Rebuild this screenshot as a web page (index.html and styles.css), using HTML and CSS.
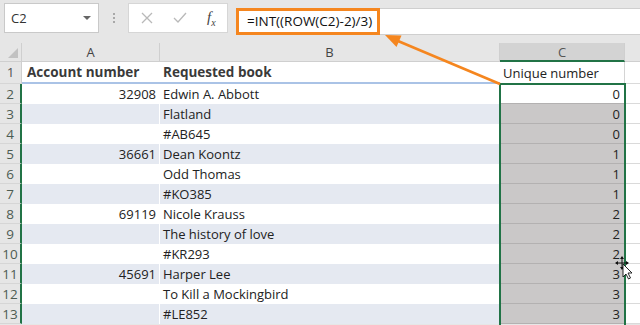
FILE: index.html
```html
<!DOCTYPE html>
<html lang="en">
  <head>
    <meta charset="UTF-8" />
    <title>Unique number</title>
    <link rel="stylesheet" href="styles.css">
  </head>
  <body>
    <!-- Formula bar -->
    <div class="toolbar">
      <div class="namebox">C2<span class="caret"></span></div>
      <div class="dots"><i></i><i></i><i></i></div>
      <div class="fbtns">
        <svg width="12" height="12" viewBox="0 0 12 12"><path d="M1 1 L11 11 M11 1 L1 11" stroke="#b9b9b9" stroke-width="1.3" fill="none"/></svg>
        <svg width="14" height="12" viewBox="0 0 14 12"><path d="M1 6 L5 10 L13 1" stroke="#b9b9b9" stroke-width="1.3" fill="none"/></svg>
        <span class="fx">f<sub>x</sub></span>
      </div>
      <div class="fbar"><span class="formula">=INT((ROW(C2)-2)/3)</span></div>
    </div>

    <!-- Sheet -->
    <div class="sheet">
      <div class="corner"><span class="tri"></span></div>
      <div class="colhead">A</div>
      <div class="colhead">B</div>
      <div class="colhead sel">C</div>
      <div class="colhead last"></div>

      <div class="rowhead">1</div>
      <div class="cell th first">Account number</div>
      <div class="cell th">Requested book</div>
      <div class="cell c1">Unique number</div>
      <div class="cell d"></div>

      <div class="rowhead on">2</div>
      <div class="cell num">32908</div>
      <div class="cell">Edwin A. Abbott</div>
      <div class="cell cc active">0</div>
      <div class="cell d"></div>

      <div class="rowhead on">3</div>
      <div class="cell num band"></div>
      <div class="cell band">Flatland</div>
      <div class="cell cc">0</div>
      <div class="cell d"></div>

      <div class="rowhead on">4</div>
      <div class="cell num"></div>
      <div class="cell">#AB645</div>
      <div class="cell cc">0</div>
      <div class="cell d"></div>

      <div class="rowhead on">5</div>
      <div class="cell num band">36661</div>
      <div class="cell band">Dean Koontz</div>
      <div class="cell cc">1</div>
      <div class="cell d"></div>

      <div class="rowhead on">6</div>
      <div class="cell num"></div>
      <div class="cell">Odd Thomas</div>
      <div class="cell cc">1</div>
      <div class="cell d"></div>

      <div class="rowhead on">7</div>
      <div class="cell num band"></div>
      <div class="cell band">#KO385</div>
      <div class="cell cc">1</div>
      <div class="cell d"></div>

      <div class="rowhead on">8</div>
      <div class="cell num">69119</div>
      <div class="cell">Nicole Krauss</div>
      <div class="cell cc">2</div>
      <div class="cell d"></div>

      <div class="rowhead on">9</div>
      <div class="cell num band"></div>
      <div class="cell band">The history of love</div>
      <div class="cell cc">2</div>
      <div class="cell d"></div>

      <div class="rowhead on">10</div>
      <div class="cell num"></div>
      <div class="cell">#KR293</div>
      <div class="cell cc">2</div>
      <div class="cell d"></div>

      <div class="rowhead on">11</div>
      <div class="cell num band">45691</div>
      <div class="cell band">Harper Lee</div>
      <div class="cell cc">3</div>
      <div class="cell d"></div>

      <div class="rowhead on">12</div>
      <div class="cell num"></div>
      <div class="cell">To Kill a Mockingbird</div>
      <div class="cell cc">3</div>
      <div class="cell d"></div>

      <div class="rowhead on">13</div>
      <div class="cell num band"></div>
      <div class="cell band">#LE852</div>
      <div class="cell cc">3</div>
      <div class="cell d"></div>

      <!-- selected range C2:C13 -->
      <div class="selection"></div>
    </div>

    <!-- Callout arrow -->
    <svg class="arrow" width="640" height="325" viewBox="0 0 640 325">
      <line x1="500" y1="84" x2="398" y2="41" stroke="#f5861f" stroke-width="2.6"/>
      <polygon points="385,35 401.5,35.5 396.5,47" fill="#f5861f"/>
    </svg>

    <!-- Mouse cursor -->
    <svg class="cursor" width="22" height="24" viewBox="0 0 22 24">
      <path d="M7 1 L7 13 M1 7 L13 7" stroke="#111" stroke-width="1"/>
      <path d="M7 0 L5 3 L9 3 Z M7 14 L5 11 L9 11 Z M0 7 L3 5 L3 9 Z M14 7 L11 5 L11 9 Z" fill="#111"/>
      <path d="M8 8 L8 21 L11 18 L13.5 23 L15.5 22 L13 17 L17 17 Z" fill="#fff" stroke="#111" stroke-width="0.9"/>
    </svg>
  </body>
</html>
```

FILE: styles.css
```css
* {
  margin: 0;
  padding: 0;
  box-sizing: border-box;
}

body {
  width: 640px;
  height: 325px;
  overflow: hidden;
  position: relative;
  background: #e6e6e6;
  font-family: "Open Sans", "Noto Sans", sans-serif;
  color: #222;
}

/* Formula bar */
.toolbar {
  height: 43px;
  display: flex;
  align-items: flex-start;
  padding: 3px 0 0 4px;
}

.namebox {
  width: 95px;
  height: 30px;
  background: #fff;
  border: 1px solid #c9c9c9;
  display: flex;
  align-items: center;
  justify-content: space-between;
  padding: 0 7px 0 6px;
  font-size: 13px;
  color: #333;
}

.caret {
  width: 0;
  height: 0;
  border-left: 4px solid transparent;
  border-right: 4px solid transparent;
  border-top: 4px solid #666;
}

.dots {
  width: 29px;
  height: 30px;
  display: flex;
  flex-direction: column;
  align-items: center;
  justify-content: center;
  gap: 2px;
}

.dots i {
  width: 2px;
  height: 2px;
  background: #a8a8a8;
}

.fbtns {
  width: 100px;
  height: 30px;
  background: #fff;
  border: 1px solid #d6d6d6;
  display: flex;
  align-items: center;
  padding-left: 12px;
  gap: 20px;
}

.fx {
  font-family: "Liberation Serif", serif;
  font-style: italic;
  font-size: 15px;
  color: #444;
}

.fx sub {
  font-size: 10px;
}

.fbar {
  flex: 1;
  margin: 5px 0 0 8px;
  height: 27px;
  background: #fff;
  border-top: 1px solid #cfcfcf;
  border-bottom: 1px solid #cfcfcf;
  display: flex;
}

.formula {
  width: 144px;
  margin-top: -1px;
  height: 27px;
  border: 3px solid #f5861f;
  font-size: 13.5px;
  color: #111;
  padding-left: 8px;
  line-height: 20px;
}

/* Sheet grid */
.sheet {
  position: relative;
  height: 282px;
  overflow: hidden;
  display: grid;
  grid-template-columns: 22px 138px 340px 125px 15px;
  grid-template-rows: 19px 22px repeat(12, 20px);
}

.corner {
  position: relative;
  border-right: 1px solid #cfcfcf;
  border-bottom: 1px solid #cfcfcf;
}

.tri {
  position: absolute;
  right: 3px;
  bottom: 3px;
  width: 0;
  height: 0;
  border-left: 10px solid transparent;
  border-bottom: 10px solid #c2c2c2;
}

.colhead {
  font-size: 13px;
  color: #444;
  text-align: center;
  line-height: 18px;
  border-right: 1px solid #cfcfcf;
  border-bottom: 1px solid #cfcfcf;
}

.colhead.sel {
  background: #d3d3d3;
  color: #555;
  border-bottom: 2px solid #217346;
}

.colhead.last {
  border-right: none;
}

.rowhead {
  font-size: 13.5px;
  color: #555;
  text-align: center;
  line-height: 20px;
  border-bottom: 1px solid #d6d6d6;
  border-right: 1px solid #cfcfcf;
}

.rowhead.on {
  border-right: 2px solid #217346;
  color: #4d5c52;
}

.cell {
  background: #fff;
  font-size: 13px;
  line-height: 20px;
  padding: 0 3px;
  white-space: nowrap;
  overflow: hidden;
}

.cell.band {
  background: #e5e9f1;
}

.cell.num {
  text-align: right;
  border-right: 1px solid #fff;
}

.cell.th {
  font-weight: 700;
  font-size: 13.5px;
  color: #3a3a3a;
  line-height: 21px;
  border-bottom: 2px solid #aac3e6;
}

.cell.th.first {
  padding-left: 5px;
}

.cell.c1 {
  line-height: 22px;
  border-right: 1px solid #d4d4d4;
  border-bottom: 1px solid #d4d4d4;
}

.cell.cc {
  background: #cac8c8;
  text-align: right;
  padding-right: 5px;
  border-bottom: 1px solid #b3b1b1;
}

.cell.cc.active {
  background: #fff;
}

.cell.d {
  border-bottom: 1px solid #dadada;
}

.selection {
  position: absolute;
  left: 499px;
  top: 40px;
  width: 127px;
  height: 300px;
  border: 2px solid #217346;
  pointer-events: none;
}

/* Overlays */
.arrow {
  position: absolute;
  left: 0;
  top: 0;
  pointer-events: none;
}

.cursor {
  position: absolute;
  left: 615px;
  top: 256px;
}
```
